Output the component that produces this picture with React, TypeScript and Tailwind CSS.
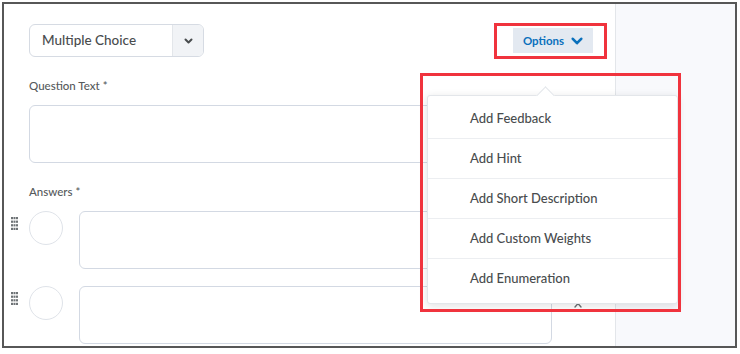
import React from "react";

const Handle = () => (
  <svg width="7" height="14" viewBox="0 0 7 14" className="shrink-0">
    {[0, 1, 2].map((c) =>
      [0, 1, 2, 3].map((r) => (
        <rect key={`${c}-${r}`} x={c * 2.5} y={r * 3.6} width="2" height="2.2" fill="#6e7376" />
      ))
    )}
  </svg>
);

const Chevron = ({ color, w, h, sw }: { color: string; w: number; h: number; sw: number }) => (
  <svg width={w} height={h} viewBox={`0 0 ${w} ${h}`} fill="none">
    <path
      d={`M${sw / 2 + 0.5} ${sw / 2 + 0.5} L${w / 2} ${h - sw / 2 - 0.5} L${w - sw / 2 - 0.5} ${sw / 2 + 0.5}`}
      stroke={color}
      strokeWidth={sw}
      strokeLinecap="round"
      strokeLinejoin="round"
    />
  </svg>
);

const menuItems = [
  "Add Feedback",
  "Add Hint",
  "Add Short Description",
  "Add Custom Weights",
  "Add Enumeration",
];

export default function App() {
  return (
    <div
      className="relative w-[740px] h-[354px] bg-white pl-[2px] pt-[2px] overflow-hidden"
      style={{ fontFamily: "Lato, 'Open Sans', sans-serif" }}
    >
      <div className="flex w-[735px] h-[346px] border-2 border-[#575757]">
        {/* main content */}
        <div className="flex flex-col w-[611px] pl-[25px] pr-[22px] pt-[20px]">
          <div className="flex items-center justify-between">
            <div className="flex h-[33px] w-[175px] rounded-[6px] border border-[#d6dbe3] overflow-hidden">
              <div className="flex flex-1 items-center pl-[12px] text-[13.5px] font-medium text-[#494c4e]">
                Multiple Choice
              </div>
              <div className="flex w-[31px] items-center justify-center bg-[#f1f3f6] border-l border-[#e3e6ea]">
                <Chevron color="#494c4e" w={9} h={6} sw={2} />
              </div>
            </div>
            <div className="flex h-[25px] w-[80px] items-center justify-center gap-[7px] bg-[#e3e9f1] text-[11.5px] font-bold text-[#0a70bc]">
              <span>Options</span>
              <Chevron color="#0a70bc" w={12} h={8} sw={2.6} />
            </div>
          </div>

          <div className="mt-[21px] h-[16px] leading-[16px] text-[11.5px] font-medium text-[#565a5c]">
            Question Text *
          </div>
          <div className="mt-[11px] h-[58px] rounded-[6px] border border-[#d3d9e3]" />

          <div className="mt-[21px] h-[16px] leading-[16px] text-[11.5px] font-medium text-[#565a5c]">
            Answers *
          </div>

          <div className="mt-[11px] -ml-[18px] flex flex-col gap-[17px]">
            {[0, 1].map((i) => (
              <div key={i} className="flex items-start">
                <div className="mt-[6px]">
                  <Handle />
                </div>
                <div className="ml-[11px] h-[34px] w-[34px] shrink-0 rounded-full border-[1.5px] border-[#dfe3e9]" />
                <div className="ml-[16px] h-[58px] w-[473px] rounded-[6px] border border-[#d3d9e3]" />
                <div className="ml-[20px] mt-[16px] flex h-[12px] w-[12px] items-start justify-center">
                  {i === 1 && (
                    <svg width="10" height="6" viewBox="0 0 10 6" fill="none">
                      <path d="M2 5 L5 1.5 L8 5" stroke="#6e7376" strokeWidth="1.4" strokeLinecap="round" />
                    </svg>
                  )}
                </div>
              </div>
            ))}
          </div>
        </div>

        {/* right panel */}
        <div className="flex-1 border-l border-[#e3e6ea] bg-[#f8f9fc]" />
      </div>

      {/* dropdown menu overlay */}
      <div className="absolute left-[427px] top-[95px] w-[251px] rounded-[3px] border border-[#e3e6ea] bg-white pt-[3px] pb-[4px] shadow-[0_2px_8px_rgba(0,0,0,0.12)]">
        <div className="absolute left-[111px] top-[-7px] h-[13px] w-[13px] rotate-45 border-l border-t border-[#e3e6ea] bg-white" />
        {menuItems.map((item, idx) => (
          <div
            key={item}
            className={`relative flex h-[40px] items-center pl-[42px] text-[13px] font-medium text-[#494c4e] ${
              idx < menuItems.length - 1 ? "border-b border-[#eceef1]" : ""
            }`}
          >
            {item}
          </div>
        ))}
      </div>

      {/* red annotation boxes */}
      <div className="absolute left-[494px] top-[23px] h-[36px] w-[113px] border-[3px] border-[#f0333d]" />
      <div className="absolute left-[420px] top-[73px] h-[239px] w-[261px] border-[3px] border-[#f0333d]" />
    </div>
  );
}
